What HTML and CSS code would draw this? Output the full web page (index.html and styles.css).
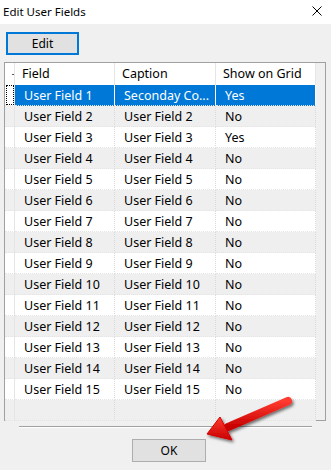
FILE: index.html
```html
<!DOCTYPE html>
<html lang="en">
<head>
  <meta charset="UTF-8" />
  <title>Edit User Fields</title>
  <link rel="stylesheet" href="styles.css">
</head>
<body>
  <div class="window">
    <div class="titlebar">
      <span class="title">Edit User Fields</span>
      <svg class="close" width="10" height="10" viewBox="0 0 10 10">
        <path d="M0.5 0.5 L9.5 9.5 M9.5 0.5 L0.5 9.5" stroke="#000" stroke-width="1" fill="none"/>
      </svg>
    </div>
    <div class="content">
      <button class="btn edit-btn">Edit</button>
      <div class="grid">
        <div class="rows" id="rows">
          <div class="cell rh head"><span class="mark"></span></div>
          <div class="cell head">Field</div>
          <div class="cell head">Caption</div>
          <div class="cell head">Show on Grid</div>
        </div>
        <div class="filler"></div>
      </div>
      <div class="sep"></div>
      <div class="footer">
        <button class="btn ok-btn">OK</button>
      </div>
    </div>
    <svg class="arrow" width="331" height="470" viewBox="0 0 331 470">
      <defs>
        <linearGradient id="red" x1="0" y1="0" x2="0" y2="1">
          <stop offset="0" stop-color="#ff3b30"/>
          <stop offset="1" stop-color="#c80000"/>
        </linearGradient>
        <filter id="shadow" x="-20%" y="-20%" width="140%" height="140%">
          <feDropShadow dx="1.5" dy="2" stdDeviation="1.5" flood-color="#000" flood-opacity="0.55"/>
        </filter>
      </defs>
      <g filter="url(#shadow)">
        <line x1="288" y1="401" x2="228" y2="427" stroke="url(#red)" stroke-width="8" stroke-linecap="round"/>
        <polygon points="207,434 220,417 232,440" fill="url(#red)" stroke="#d40000" stroke-width="1" stroke-linejoin="round"/>
      </g>
    </svg>
  </div>
<script>
  const rows = document.getElementById('rows');
  const shown = { 1: 'Yes', 3: 'Yes' };
  for (let i = 1; i <= 16; i++) {
    const cls = 'cell' + (i % 2 === 0 ? ' alt' : '') + (i === 1 ? ' sel' : '');
    const blank = i === 16;
    const caption = i === 1 ? 'Seconday Co...' : 'User Field ' + i;
    rows.insertAdjacentHTML('beforeend',
      `<div class="cell rh${i % 2 === 0 ? ' alt' : ''}">${i === 1 ? '<span class="focus"></span>' : ''}</div>` +
      `<div class="${cls}">${blank ? '' : 'User Field ' + i}</div>` +
      `<div class="${cls}">${blank ? '' : caption}</div>` +
      `<div class="${cls}">${blank ? '' : (shown[i] || 'No')}</div>`);
  }
</script>
</body>
</html>
```

FILE: styles.css
```css
body {
  margin: 0;
  font-family: "Noto Sans", "Open Sans", sans-serif;
  color: #000;
}
.window {
  position: relative;
  width: 331px;
  height: 470px;
  background: #f0f0f0;
  overflow: hidden;
}
.titlebar {
  height: 24px;
  background: #fff;
  display: flex;
  align-items: center;
  justify-content: space-between;
  padding: 0 9px 0 3px;
}
.title {
  font-size: 11.5px;
  margin-top: -2px;
}
.close { margin-top: -2px; }

.content {
  display: flex;
  flex-direction: column;
}
.btn {
  font-family: inherit;
  font-size: 12px;
  background: #e1e1e1;
  border: 1px solid #adadad;
  color: #000;
  padding: 0;
}
.edit-btn {
  margin: 8px 0 0 6px;
  width: 73px;
  height: 23px;
  border: 2px solid #0078d7;
}

.grid {
  margin: 7px 0 0 4px;
  width: 322px;
  height: 359px;
  box-sizing: border-box;
  border: 1px solid #a0a0a0;
  background: #f0f0f0;
  display: flex;
  flex-direction: column;
}
.rows {
  display: grid;
  grid-template-columns: 10px 100px 101px 100px;
  grid-template-rows: 22px;
  grid-auto-rows: 21px;
  background: #fff;
  width: 311px;
}
.filler {
  flex: 1;
  width: 311px;
  background: #fff;
}
.cell {
  box-sizing: border-box;
  font-size: 12.5px;
  line-height: 21px;
  padding-left: 9px;
  white-space: nowrap;
  overflow: hidden;
  border-right: 1px dotted #dadada;
  border-bottom: 1px dotted #e4e4e4;
  position: relative;
}
.cell.head {
  padding-left: 7px;
  line-height: 22px;
  border-right: 1px solid #e5e5e5;
  border-bottom: none;
}
.cell.rh {
  padding: 0;
  border-right: 1px solid #e5e5e5;
}
.cell.alt { background: #efefef; }
.cell.sel {
  background: #0078d7;
  color: #fff;
  border-right: 1px solid #fff;
}
.mark {
  position: absolute;
  right: 0;
  top: 11px;
  width: 2px;
  height: 1px;
  background: #555;
}
.focus {
  position: absolute;
  left: 1px;
  top: 0;
  right: 0;
  bottom: 0;
  border: 1px dotted #000;
}

.sep {
  margin: 5px 0 0 19px;
  width: 293px;
  height: 1px;
  background: #a0a0a0;
  border-bottom: 1px solid #fff;
}
.footer {
  display: flex;
  margin: 11px 0 0 132px;
}
.ok-btn {
  width: 74px;
  height: 23px;
}

.arrow {
  position: absolute;
  left: 0;
  top: 0;
  pointer-events: none;
}
```
